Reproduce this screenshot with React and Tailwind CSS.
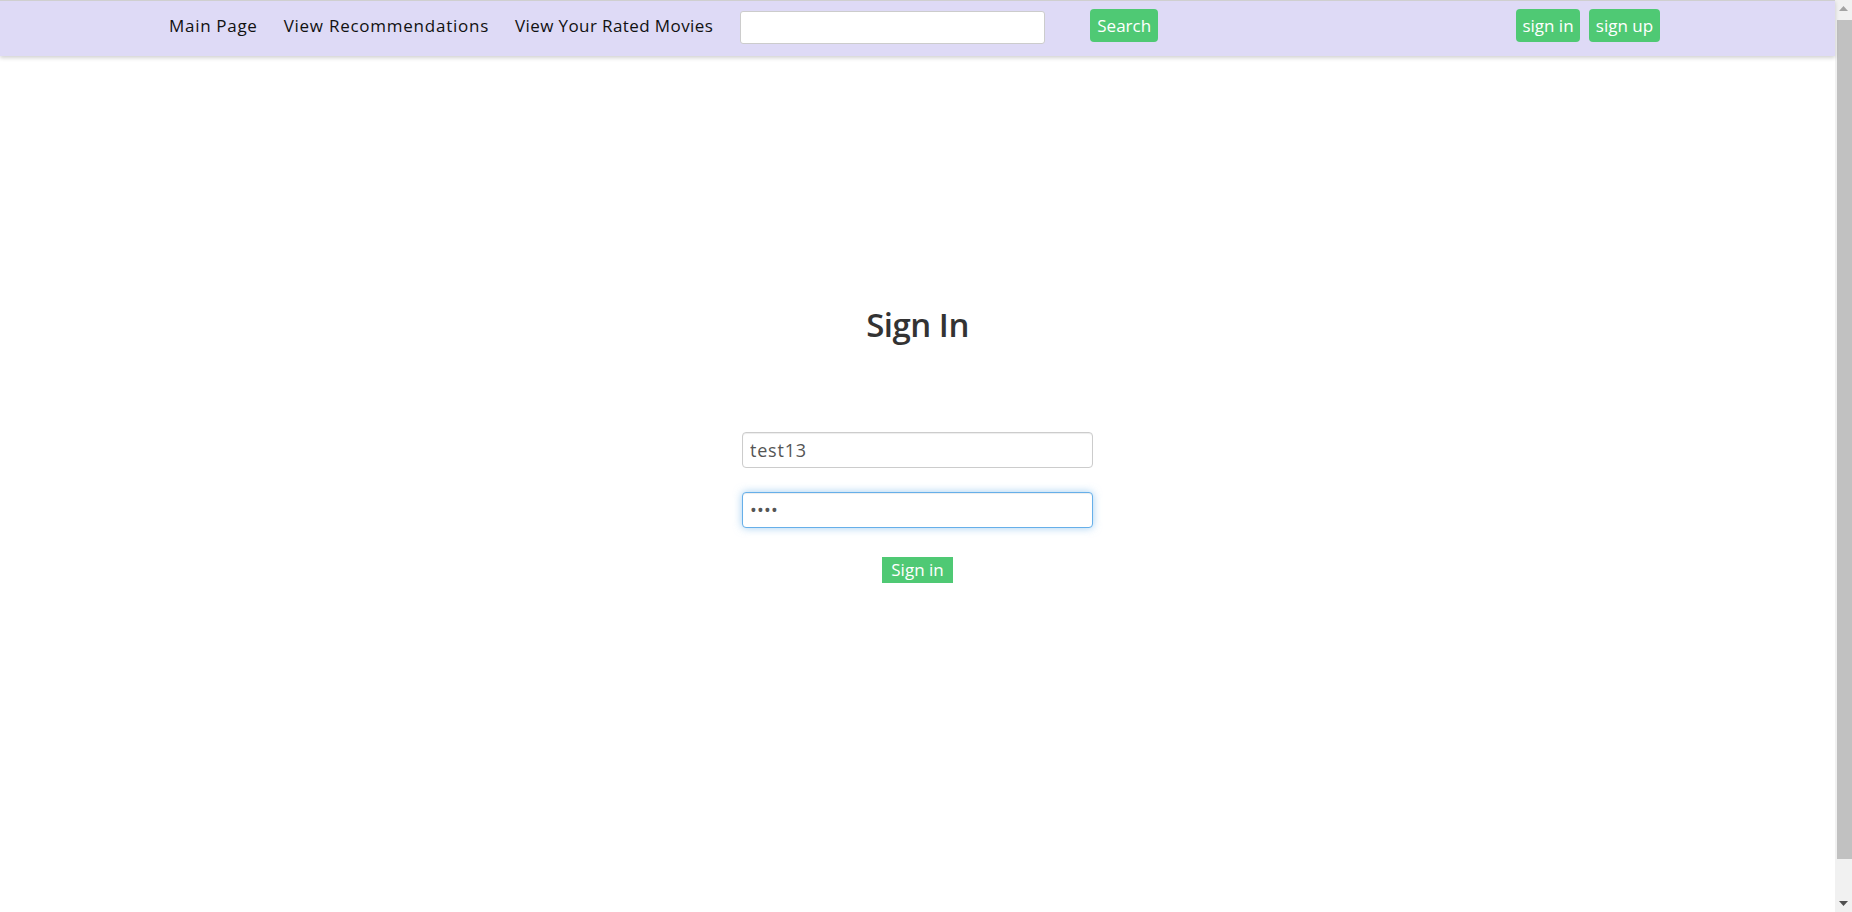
import { useState } from 'react';

const font = { fontFamily: '"Open Sans", "Liberation Sans", sans-serif' };

const NavBar = () => {
  const [query, setQuery] = useState('');

  return (
    <nav className="h-[56px] bg-[#dedaf6] border-t border-[#cfcfcf] shadow-[0_2px_4px_rgba(0,0,0,0.18)] relative z-10">
      <div className="flex justify-between items-start pt-[8px] pl-[169px] pr-[175px]">
        <div className="flex items-start">
          <a href="#" className="h-[33px] leading-[33px] text-[17px] text-[#111] tracking-[0.7px]">Main Page</a>
          <a href="#" className="ml-[26px] h-[33px] leading-[33px] text-[17px] text-[#111] tracking-[0.75px]">View Recommendations</a>
          <a href="#" className="ml-[26px] h-[33px] leading-[33px] text-[17px] text-[#111] tracking-[0.4px]">View Your Rated Movies</a>
          <input
            type="text"
            value={query}
            onChange={(e) => setQuery(e.target.value)}
            className="ml-[27px] mt-[2px] w-[305px] h-[33px] bg-white border border-[#cccccc] rounded-[3px] px-2 text-[16px] outline-none"
          />
          <button className="ml-[45px] h-[33px] w-[68px] bg-[#4fc974] text-white text-[17px] rounded-[4px]">Search</button>
        </div>
        <div className="flex items-start gap-[9px]">
          <button className="h-[33px] w-[64px] bg-[#4fc974] text-white text-[17px] rounded-[4px]">sign in</button>
          <button className="h-[33px] w-[71px] bg-[#4fc974] text-white text-[17px] rounded-[4px]">sign up</button>
        </div>
      </div>
    </nav>
  );
};

const SignIn = () => {
  const [username, setUsername] = useState('test13');
  const [password, setPassword] = useState('1234');

  return (
    <div className="flex flex-col items-center pt-[249px]">
      <h1 className="text-[33px] leading-[40px] font-semibold text-[#333] tracking-[-0.5px]">Sign In</h1>
      <form className="flex flex-col items-center mt-[87px]" onSubmit={(e) => e.preventDefault()}>
        <input
          type="text"
          value={username}
          onChange={(e) => setUsername(e.target.value)}
          className="w-[351px] h-[36px] bg-white border border-[#cccccc] rounded-[4px] px-[7px] text-[18px] tracking-[0.8px] text-[#555] outline-none shadow-[inset_0_1px_1px_rgba(0,0,0,0.075)]"
        />
        <input
          type="password"
          value={password}
          onChange={(e) => setPassword(e.target.value)}
          className="mt-[24px] w-[351px] h-[36px] bg-white border border-[#66afe9] rounded-[4px] px-[7px] text-[18px] tracking-[0.2px] text-[#555] outline-none shadow-[inset_0_1px_1px_rgba(0,0,0,0.075),0_0_8px_rgba(102,175,233,0.6)]"
        />
        <button type="submit" className="mt-[29px] w-[71px] h-[26px] bg-[#4fc974] text-white text-[17px] leading-[26px]">Sign in</button>
      </form>
    </div>
  );
};

// window scrollbar as it appears in the screenshot
const ScrollBar = () => (
  <div className="w-[17px] h-full bg-[#f1f1f1] flex flex-col items-center">
    <div className="h-[17px] w-full flex items-center justify-center">
      <svg width="9" height="5" viewBox="0 0 9 5"><path d="M4.5 0 L9 5 L0 5 Z" fill="#a3a3a3" /></svg>
    </div>
    <div className="flex-1 w-[15px] ml-[1px] bg-[#c1c1c1] mb-[36px] mt-[3px]"></div>
    <div className="h-[17px] w-full flex items-center justify-center bg-[#f1f1f1]">
      <svg width="9" height="5" viewBox="0 0 9 5"><path d="M0 0 L9 0 L4.5 5 Z" fill="#505050" /></svg>
    </div>
  </div>
);

export default function App() {
  return (
    <div className="h-screen flex bg-white overflow-hidden" style={font}>
      <div className="flex-1 min-w-0">
        <NavBar />
        <SignIn />
      </div>
      <ScrollBar />
    </div>
  );
}
